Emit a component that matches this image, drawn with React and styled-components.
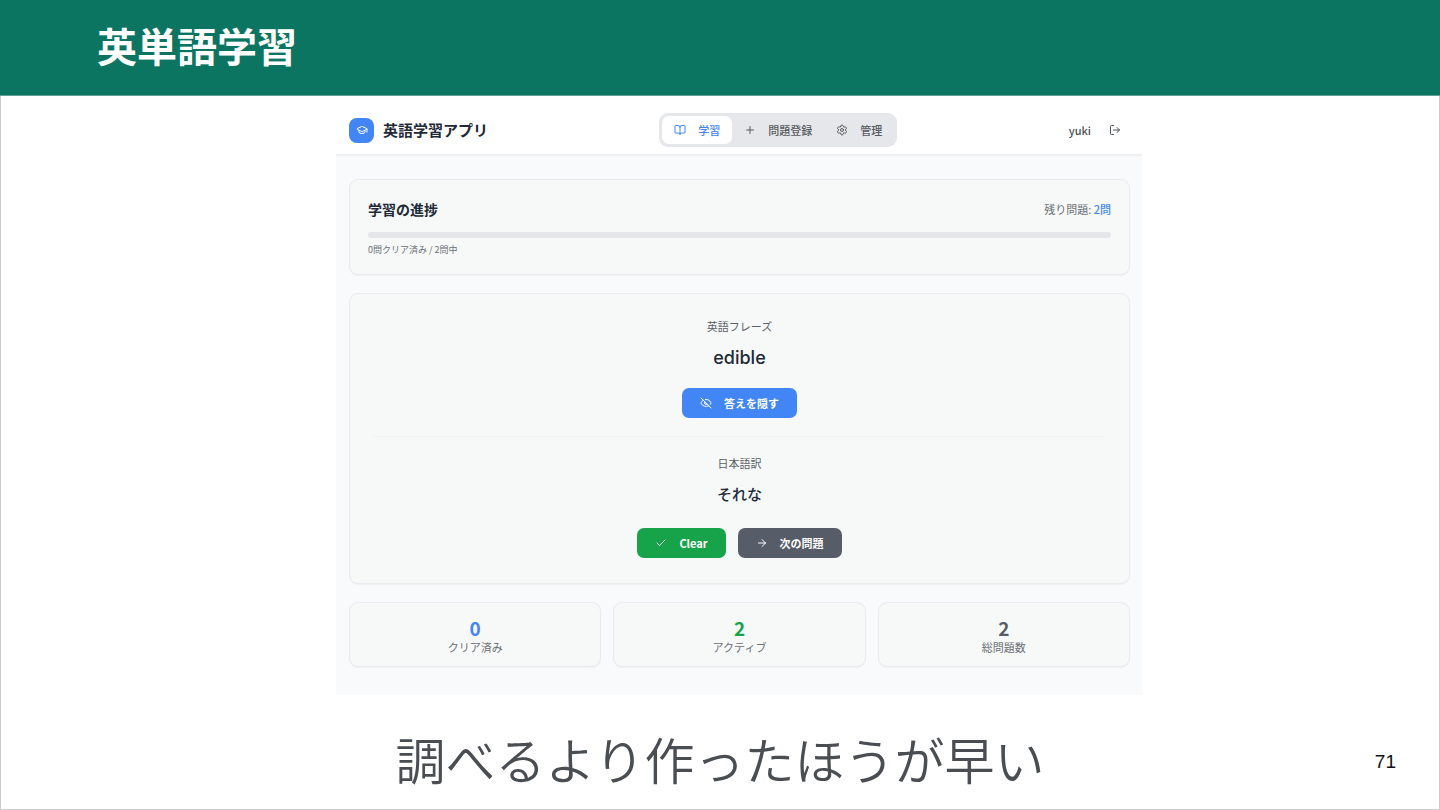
import React from 'react';
import styled, { createGlobalStyle } from 'styled-components';
import {
    ArrowRight,
    BookOpen,
    Check,
    EyeOff,
    GraduationCap,
    LogOut,
    Plus,
    Settings,
} from 'lucide-react';

const COLOR_BRAND = '#0c7562';
const COLOR_BLUE = '#4285f4';
const COLOR_GREEN = '#16a34a';
const COLOR_GRAY = '#575c69';
const COLOR_TEXT = '#1f2937';
const COLOR_MUTED = '#6b7075';
const COLOR_LINE = '#e9ebee';

const GlobalStyle = createGlobalStyle`
    *, *::before, *::after {
        box-sizing: border-box;
    }
    body {
        margin: 0;
        font-family: "Noto Sans CJK JP", "Noto Sans", sans-serif;
        color: ${COLOR_TEXT};
    }
    h1, h2, p {
        margin: 0;
    }
    button {
        border: 0;
        padding: 0;
        background: none;
        font: inherit;
        color: inherit;
        cursor: pointer;
    }
`;

const Slide = styled.div`
    display: flex;
    flex-direction: column;
    min-height: 100vh;
    background-color: #fff;
`;

const SlideHeader = styled.header`
    padding: 15px 97px 20px;
    background-color: ${COLOR_BRAND};
    border-bottom: 1px solid #5fa396;
`;

const SlideTitle = styled.h1`
    font-size: 40px;
    line-height: 60px;
    font-weight: 700;
    color: #fff;
`;

const SlideBody = styled.div`
    display: flex;
    flex-direction: column;
    flex: 1;
    padding-top: 9px;
    border: 1px solid #ccc;
    border-top: 0;
`;

const AppPanel = styled.div`
    margin: 0 297px 0 335px;
    background-color: #f9fafc;
`;

const AppHeader = styled.header`
    display: flex;
    align-items: center;
    justify-content: space-between;
    padding: 8px 12px 7px 13px;
    background-color: #fff;
    border-bottom: 2px solid #eff0f2;
`;

const Brand = styled.div`
    display: flex;
    align-items: center;
    gap: 9px;
    font-size: 15px;
    line-height: 24px;
    font-weight: 700;
`;

const Logo = styled.span`
    display: flex;
    align-items: center;
    justify-content: center;
    width: 25px;
    height: 25px;
    border-radius: 8px;
    background-color: ${COLOR_BLUE};
    color: #fff;
`;

const Tabs = styled.nav`
    display: flex;
    padding: 3px;
    border-radius: 9px;
    background-color: #e5e7eb;
`;

const Tab = styled.button`
    && {
        display: flex;
        align-items: center;
        gap: 12px;
        padding: 0 12px;
        border-radius: 7px;
        font-size: 11px;
        line-height: 28px;
        font-weight: 500;
        color: ${({ $active }) => ($active ? COLOR_BLUE : '#575b60')};
        background-color: ${({ $active }) => ($active ? '#fff' : 'transparent')};
    }
`;

const UserArea = styled.div`
    display: flex;
    align-items: center;
    gap: 18px;
    padding-right: 9px;
    font-size: 11px;
    line-height: 18px;
    font-weight: 500;
    color: #4b5055;
    button {
        display: flex;
    }
`;

const Main = styled.main`
    display: flex;
    flex-direction: column;
    gap: 18px;
    padding: 23px 12px 28px 13px;
`;

const Card = styled.section`
    border: 1px solid ${COLOR_LINE};
    border-radius: 9px;
    background-color: #f7f9f9;
    box-shadow: 0 1px 1px rgba(0, 0, 0, 0.04);
`;

const ProgressCard = styled(Card)`
    padding: 18px;
`;

const ProgressHead = styled.div`
    display: flex;
    align-items: center;
    justify-content: space-between;
    margin-bottom: 12px;
`;

const ProgressTitle = styled.h2`
    font-size: 14px;
    line-height: 22px;
    font-weight: 700;
`;

const Remaining = styled.p`
    font-size: 11px;
    line-height: 18px;
    color: ${COLOR_MUTED};
    span {
        font-weight: 500;
        color: ${COLOR_BLUE};
    }
`;

const Bar = styled.div`
    height: 6px;
    margin-bottom: 6px;
    border-radius: 3px;
    overflow: hidden;
    background-color: #e4e6e9;
`;

const BarFill = styled.div`
    height: 100%;
    background-color: ${COLOR_BLUE};
`;

const ProgressNote = styled.p`
    font-size: 9px;
    line-height: 12px;
    color: ${COLOR_MUTED};
`;

const QuestionCard = styled(Card)`
    padding: 24px 24px 25px;
    text-align: center;
`;

const Label = styled.p`
    margin-bottom: 9px;
    font-size: 11px;
    line-height: 17px;
    color: #5b6065;
`;

const Phrase = styled.p`
    margin-bottom: 17px;
    font-family: Inter, "Noto Sans CJK JP", sans-serif;
    font-size: 18px;
    line-height: 27px;
    font-weight: 500;
`;

const Answer = styled.div`
    margin-top: 18px;
    padding-top: 18px;
    border-top: 1px solid #eef0f1;
`;

const AnswerText = styled.p`
    margin-bottom: 22px;
    font-size: 15px;
    line-height: 25px;
    font-weight: 500;
`;

const Actions = styled.div`
    display: flex;
    justify-content: center;
    gap: 12px;
`;

const Button = styled.button`
    && {
        display: flex;
        align-items: center;
        gap: 12px;
        padding: 0 18px;
        border-radius: 7px;
        font-size: 11px;
        line-height: 30px;
        font-weight: 700;
        color: #fff;
        background-color: ${({ $color }) => $color};
    }
`;

const Stats = styled.div`
    display: grid;
    grid-template-columns: repeat(3, 1fr);
    gap: 12px;
`;

const StatCard = styled(Card)`
    padding: 12px;
    text-align: center;
`;

const StatValue = styled.p`
    font-size: 19px;
    line-height: 25px;
    font-weight: 700;
    color: ${({ $color }) => $color};
`;

const StatLabel = styled.p`
    font-size: 11px;
    line-height: 14px;
    color: ${COLOR_MUTED};
`;

const SlideFooter = styled.footer`
    display: grid;
    grid-template-columns: 1fr auto 1fr;
    align-items: center;
    flex: 1;
    padding: 12px 43px 0;
`;

const Caption = styled.p`
    grid-column: 2;
    font-size: 50px;
    line-height: 72px;
    font-weight: 350;
    color: #4a4e52;
`;

const PageNumber = styled.span`
    justify-self: end;
    padding-top: 8px;
    font-family: "Liberation Sans", Arial, sans-serif;
    font-size: 19px;
    line-height: 24px;
    color: #111;
`;

const tabs = [
    { label: '学習', Icon: BookOpen },
    { label: '問題登録', Icon: Plus },
    { label: '管理', Icon: Settings },
];

const stats = [
    { label: 'クリア済み', value: 0, color: COLOR_BLUE },
    { label: 'アクティブ', value: 2, color: COLOR_GREEN },
    { label: '総問題数', value: 2, color: COLOR_GRAY },
];

const cleared = 0;
const total = 2;

function App() {
    return (
        <>
            <GlobalStyle />
            <Slide>
                <SlideHeader>
                    <SlideTitle>英単語学習</SlideTitle>
                </SlideHeader>
                <SlideBody>
                    <AppPanel>
                        <AppHeader>
                            <Brand>
                                <Logo><GraduationCap size={12} /></Logo>
                                英語学習アプリ
                            </Brand>
                            <Tabs>
                                {tabs.map(({ label, Icon }, i) => (
                                    <Tab key={label} type="button" $active={i === 0}>
                                        <Icon size={12} />
                                        {label}
                                    </Tab>
                                ))}
                            </Tabs>
                            <UserArea>
                                yuki
                                <button type="button" aria-label="ログアウト">
                                    <LogOut size={12} />
                                </button>
                            </UserArea>
                        </AppHeader>
                        <Main>
                            <ProgressCard>
                                <ProgressHead>
                                    <ProgressTitle>学習の進捗</ProgressTitle>
                                    <Remaining>残り問題: <span>{total - cleared}問</span></Remaining>
                                </ProgressHead>
                                <Bar>
                                    <BarFill style={{ width: `${(cleared / total) * 100}%` }} />
                                </Bar>
                                <ProgressNote>{`${cleared}問クリア済み / ${total}問中`}</ProgressNote>
                            </ProgressCard>
                            <QuestionCard>
                                <Label>英語フレーズ</Label>
                                <Phrase>edible</Phrase>
                                <Actions>
                                    <Button type="button" $color={COLOR_BLUE}>
                                        <EyeOff size={12} />
                                        答えを隠す
                                    </Button>
                                </Actions>
                                <Answer>
                                    <Label>日本語訳</Label>
                                    <AnswerText>それな</AnswerText>
                                    <Actions>
                                        <Button type="button" $color={COLOR_GREEN}>
                                            <Check size={12} />
                                            Clear
                                        </Button>
                                        <Button type="button" $color={COLOR_GRAY}>
                                            <ArrowRight size={12} />
                                            次の問題
                                        </Button>
                                    </Actions>
                                </Answer>
                            </QuestionCard>
                            <Stats>
                                {stats.map(({ label, value, color }) => (
                                    <StatCard key={label}>
                                        <StatValue $color={color}>{value}</StatValue>
                                        <StatLabel>{label}</StatLabel>
                                    </StatCard>
                                ))}
                            </Stats>
                        </Main>
                    </AppPanel>
                    <SlideFooter>
                        <Caption>調べるより作ったほうが早い</Caption>
                        <PageNumber>71</PageNumber>
                    </SlideFooter>
                </SlideBody>
            </Slide>
        </>
    );
}

export default App;
